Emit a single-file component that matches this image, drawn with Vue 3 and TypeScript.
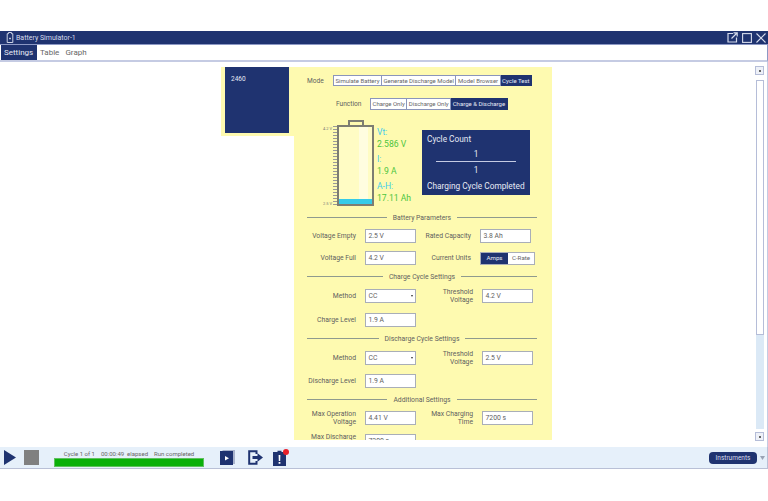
<script setup lang="ts">
const tabs = ['Settings', 'Table', 'Graph']
const modes = ['Simulate Battery', 'Generate Discharge Model', 'Model Browser', 'Cycle Test']
const functions = ['Charge Only', 'Discharge Only', 'Charge & Discharge']
</script>

<template>
  <div class="page">
    <header class="title-bar">
      <svg class="title-icon" viewBox="0 0 8 11" width="8" height="11">
        <path d="M2.500 .5h3v1.200h1.300v8.800H1.200V1.700h1.300z" fill="none" stroke="#dfe4f2" stroke-width=".9" />
        <path d="M3 6.500h2M4 5.500v2" stroke="#dfe4f2" stroke-width=".7" />
      </svg>
      <span class="title-text">Battery Simulator-1</span>
      <div class="window-btns">
        <svg viewBox="0 0 11 11" width="11" height="11">
          <path d="M6 1.500H1v8.500h8.500V5.500" fill="none" stroke="#d5dbec" stroke-width="1.200" />
          <path d="M4.500 6.500 10 1M6.500 .8h3.700v3.700" fill="none" stroke="#d5dbec" stroke-width="1.200" />
        </svg>
        <svg viewBox="0 0 10 10" width="10" height="10">
          <rect x=".6" y=".6" width="8.800" height="8.800" fill="none" stroke="#d5dbec" stroke-width="1.100" />
        </svg>
        <svg viewBox="0 0 10 10" width="10" height="10">
          <path d="M.5.500l9 9M9.500.500l-9 9" stroke="#d5dbec" stroke-width="1.100" />
        </svg>
      </div>
    </header>

    <nav class="tab-bar">
      <span v-for="(tab, i) in tabs" :key="tab" class="tab" :class="{ active: i === 0 }">{{ tab }}</span>
    </nav>

    <main class="content">
      <div class="panel-wrap">
        <section class="panel">
          <div class="side">
            <div class="side-box">2460</div>
          </div>
          <div class="form">
            <div class="mode-row">
              <span class="mode-label">Mode</span>
              <div class="btn-group">
                <span v-for="(m, i) in modes" :key="m" class="seg" :class="{ on: i === 3 }">{{ m }}</span>
              </div>
            </div>
            <div class="func-row">
              <span class="mode-label">Function</span>
              <div class="btn-group tall">
                <span v-for="(f, i) in functions" :key="f" class="seg" :class="{ on: i === 2 }">{{ f }}</span>
              </div>
            </div>

            <div class="status">
              <div class="scale-labels">
                <span>4.2 V</span>
                <span>2.5 V</span>
              </div>
              <div class="ticks"></div>
              <div class="battery">
                <div class="cap"></div>
                <div class="cell">
                  <div class="shine"></div>
                  <div class="charge"></div>
                </div>
              </div>
              <div class="readout">
                <span class="key">Vt:</span>
                <span class="val">2.586 V</span>
                <span class="key gap">I:</span>
                <span class="val">1.9 A</span>
                <span class="key gap">A-H:</span>
                <span class="val">17.11 Ah</span>
              </div>
              <div class="count-box">
                <div>Cycle Count</div>
                <div class="count-num">1</div>
                <div class="count-line"></div>
                <div class="count-num second">1</div>
                <div class="count-msg">Charging Cycle Completed</div>
              </div>
            </div>

            <div class="legend"><span>Battery Parameters</span></div>
            <div class="row r8">
              <label class="lbl">Voltage Empty</label>
              <div class="inp">2.5 V</div>
              <label class="lbl lbl2">Rated Capacity</label>
              <div class="inp">3.8 Ah</div>
            </div>
            <div class="row r8">
              <label class="lbl">Voltage Full</label>
              <div class="inp">4.2 V</div>
              <label class="lbl lbl2">Current Units</label>
              <div class="toggle">
                <span class="t-on">Amps</span>
                <span class="t-off">C-Rate</span>
              </div>
            </div>

            <div class="legend"><span>Charge Cycle Settings</span></div>
            <div class="row r9">
              <label class="lbl">Method</label>
              <div class="inp">CC<i class="caret"></i></div>
              <label class="lbl lbl3">Threshold<br />Voltage</label>
              <div class="inp">4.2 V</div>
            </div>
            <div class="row r10">
              <label class="lbl">Charge Level</label>
              <div class="inp">1.9 A</div>
            </div>

            <div class="legend"><span>Discharge Cycle Settings</span></div>
            <div class="row r9">
              <label class="lbl">Method</label>
              <div class="inp">CC<i class="caret"></i></div>
              <label class="lbl lbl3">Threshold<br />Voltage</label>
              <div class="inp">2.5 V</div>
            </div>
            <div class="row r9">
              <label class="lbl">Discharge Level</label>
              <div class="inp">1.9 A</div>
            </div>

            <div class="legend"><span>Additional Settings</span></div>
            <div class="row r8">
              <label class="lbl">Max Operation<br />Voltage</label>
              <div class="inp">4.41 V</div>
              <label class="lbl lbl3">Max Charging<br />Time</label>
              <div class="inp">7200 s</div>
            </div>
            <div class="row r9">
              <label class="lbl">Max Discharge<br />Time</label>
              <div class="inp">7200 s</div>
            </div>
          </div>
        </section>
      </div>

      <aside class="scroll">
        <div class="scroll-btn"><i></i></div>
        <div class="scroll-track"><div class="scroll-thumb"></div></div>
        <div class="scroll-btn"><i></i></div>
      </aside>
    </main>

    <footer class="bottom-bar">
      <svg class="play" viewBox="0 0 12 15" width="12" height="15"><path d="M0 0l12 7.500L0 15z" fill="#1f3370" /></svg>
      <div class="stop"></div>
      <div class="run">
        <div class="run-text">
          <span>Cycle 1 of 1</span>
          <span>00:00:49&nbsp; elapsed</span>
          <span>Run completed</span>
        </div>
        <div class="progress"></div>
      </div>
      <svg class="tool first" viewBox="0 0 15 15" width="15" height="15">
        <rect x="2.500" y="0" width="12.500" height="14" fill="#a9b3cc" />
        <rect x="0" y="1" width="13" height="14" fill="#1f3370" />
        <path d="M5 6l4 2.200L5 10.500z" fill="#fff" />
      </svg>
      <svg class="tool second" viewBox="0 0 15 15" width="15" height="15">
        <path d="M8.500 4V1.200H1.200v12.600h7.300V11" fill="none" stroke="#1f3370" stroke-width="2" />
        <path d="M4.500 6h5V3.200L15 7.500l-5.500 4.300V9h-5z" fill="#1f3370" />
      </svg>
      <div class="alert">
        <svg viewBox="0 0 13 16" width="13" height="16">
          <path d="M0 2h4.500V.8h4V2H13v14H0z" fill="#1f3370" />
          <path d="M5.600 5h1.800l-.2 6H5.800zM5.600 12h1.800v1.700H5.600z" fill="#fff" />
        </svg>
        <span class="badge"></span>
      </div>
      <button class="instruments">Instruments</button>
      <svg class="more" viewBox="0 0 5 4" width="5" height="4"><path d="M0 0h5L2.500 4z" fill="#9aa3b5" /></svg>
    </footer>
  </div>
</template>

<style>
html,
body {
  margin: 0;
  background: #fff;
}
</style>

<style scoped>
.page {
  width: 768px;
  height: 501px;
  padding-top: 31px;
  box-sizing: border-box;
  display: flex;
  flex-direction: column;
  overflow: hidden;
  font-family: Roboto, "Liberation Sans", sans-serif;
  color: #5f5f5f;
}

.title-bar {
  height: 13px;
  flex: none;
  background: #1f3370;
  border-bottom: 1px solid #8c98c4;
  display: flex;
  align-items: center;
  color: #d5dbec;
  font-size: 7px;
  padding: 0 2px 0 6px;
}

.title-icon {
  flex: none;
}

.title-text {
  margin-left: 2px;
}

.window-btns {
  margin-left: auto;
  display: flex;
  align-items: center;
  gap: 4px;
}

.tab-bar {
  height: 15px;
  flex: none;
  display: flex;
  padding-left: 1px;
  border-bottom: 2px solid #c5cbe3;
  border-right: 1px solid #8c98c4;
  font-size: 8px;
}

.tab {
  margin-left: 3px;
  margin-right: 3px;
  line-height: 15px;
  color: #666;
}

.tab.active {
  width: 36px;
  margin: 0;
  padding-left: 3px;
  background: #1f3370;
  color: #e6eaf5;
  line-height: 15px;
  height: 15px;
  box-sizing: border-box;
  flex: none;
}

.content {
  height: 385px;
  flex: none;
  display: flex;
  border-right: 1px solid #c5cbe3;
  position: relative;
}

.panel-wrap {
  width: 755px;
  flex: none;
  padding: 5px 0 0 221px;
  box-sizing: border-box;
}

.panel {
  width: 331px;
  height: 373px;
  display: flex;
  overflow: hidden;
}

.side {
  width: 73px;
  height: 69px;
  flex: none;
  background: #fefab0;
  padding-left: 4px;
  box-sizing: border-box;
}

.side-box {
  width: 64px;
  height: 66px;
  background: #1f3370;
  color: #e6eaf5;
  font-size: 6.500px;
  padding: 8px 0 0 6px;
  box-sizing: border-box;
}

.form {
  width: 258px;
  flex: none;
  background: #fefab0;
  padding: 8px 15px 0 13px;
  box-sizing: border-box;
}

.mode-row {
  display: flex;
  align-items: center;
  height: 11px;
}

.mode-label {
  font-size: 6.600px;
  flex: none;
  color: #5f5f5f;
}

.mode-row .mode-label {
  width: 26px;
}

.func-row {
  display: flex;
  align-items: center;
  height: 12px;
  margin-top: 12px;
  padding-left: 29px;
}

.func-row .mode-label {
  width: 34px;
}

.btn-group {
  display: flex;
  flex: none;
  height: 11px;
}

.btn-group.tall {
  height: 12px;
}

.seg {
  background: #fff;
  border: 1px solid #8b95bb;
  border-left-width: 0;
  color: #666;
  font-size: 6px;
  line-height: 1;
  padding: 0 1.500px;
  display: flex;
  align-items: center;
  white-space: nowrap;
}

.seg:first-child {
  border-left-width: 1px;
}

.seg.on {
  background: #1f3370;
  border-color: #1f3370;
  color: #e6eaf5;
}

.status {
  height: 86px;
  margin-top: 10px;
  display: flex;
  padding-left: 16px;
}

.scale-labels {
  width: 10px;
  height: 80px;
  margin-top: 6px;
  display: flex;
  flex-direction: column;
  justify-content: space-between;
  font-size: 4px;
  color: #777;
}

.ticks {
  width: 4px;
  height: 79px;
  margin-top: 6px;
  background: repeating-linear-gradient(to bottom, #999 0 1px, transparent 1px 3px);
}

.battery {
  width: 37px;
  flex: none;
}

.cap {
  width: 16px;
  height: 5px;
  margin-left: 11px;
  border: 2px solid #7d7d72;
  border-bottom: 0;
  box-sizing: border-box;
}

.cell {
  height: 81px;
  border: 2px solid #7d7d72;
  box-sizing: border-box;
  background: #fffcc4;
  position: relative;
}

.shine {
  position: absolute;
  top: 0;
  bottom: 0;
  left: 20px;
  width: 9px;
  background: #fffde0;
}

.charge {
  position: absolute;
  left: 0;
  right: 0;
  bottom: 0;
  height: 5px;
  background: #35cbe8;
}

.readout {
  width: 45px;
  flex: none;
  margin-left: 3px;
  padding-top: 6px;
  display: flex;
  flex-direction: column;
  font-size: 8.600px;
  line-height: 12px;
}

.key {
  color: #42cdea;
}

.key.gap {
  margin-top: 3px;
}

.val {
  color: #4cc53e;
}

.count-box {
  width: 108px;
  height: 65px;
  flex: none;
  margin-top: 10px;
  background: #1f3370;
  color: #e6eaf5;
  font-size: 8.300px;
  line-height: 11px;
  padding: 4px 5px 0;
  box-sizing: border-box;
}

.count-num {
  text-align: center;
  margin-top: 4px;
}

.count-num.second {
  margin-top: 3px;
}

.count-line {
  height: 1px;
  margin: 1px 9px 0;
  background: #c5cbe3;
}

.count-msg {
  margin-top: 5px;
  white-space: nowrap;
}

.legend {
  height: 8px;
  margin-top: 7px;
  display: flex;
  align-items: center;
  gap: 6px;
  font-size: 6.800px;
  color: #5f5f5f;
  white-space: nowrap;
}

.legend span {
  padding-top: 1px;
}

.legend::before,
.legend::after {
  content: "";
  flex: 1;
  height: 1px;
  background: #8f9a8e;
}

.row {
  display: flex;
  align-items: center;
  height: 14px;
}

.r8 {
  margin-top: 8px;
}

.r9 {
  margin-top: 9px;
}

.r10 {
  margin-top: 10px;
}

.lbl {
  width: 49px;
  flex: none;
  margin-right: 9px;
  text-align: right;
  font-size: 6.800px;
  line-height: 8px;
  color: #5f5f5f;
  white-space: nowrap;
}

.lbl2 {
  width: 55px;
}

.lbl3 {
  width: 57px;
}

.inp {
  width: 51px;
  height: 14px;
  flex: none;
  background: #fff;
  border: 1px solid #a9aeb8;
  box-sizing: border-box;
  font-size: 6.800px;
  line-height: 12px;
  padding-left: 2.500px;
  color: #5f5f5f;
  position: relative;
}

.caret {
  position: absolute;
  right: 2px;
  top: 5px;
  border-left: 1.500px solid transparent;
  border-right: 1.500px solid transparent;
  border-top: 2px solid #333;
}

.toggle {
  width: 55px;
  height: 13px;
  display: flex;
  background: #fff;
  border: 1px solid #a9aeb8;
  box-sizing: border-box;
  font-size: 6.200px;
  line-height: 11px;
  text-align: center;
}

.t-on {
  width: 27px;
  background: #1f3370;
  color: #e6eaf5;
}

.t-off {
  flex: 1;
  color: #666;
}

.scroll {
  position: absolute;
  right: 3px;
  top: 4px;
  width: 9px;
  height: 375px;
  display: flex;
  flex-direction: column;
  align-items: center;
}

.scroll-btn {
  width: 9px;
  height: 9px;
  flex: none;
  background: #eef1f8;
  border: 1px solid #b5bdd8;
  box-sizing: border-box;
  display: flex;
  align-items: center;
  justify-content: center;
}

.scroll-btn i {
  width: 2px;
  height: 2px;
  background: #666;
}

.scroll-track {
  width: 8px;
  flex: 1;
  margin: 5px 0 3px;
  background: #dbe9f6;
}

.scroll-thumb {
  height: 255px;
  background: #fff;
  border: 1px solid #b5bdd8;
  box-sizing: border-box;
}

.bottom-bar {
  height: 22px;
  flex: none;
  background: #e6f0fa;
  border-bottom: 1px solid #b9c0d6;
  border-right: 1px solid #b9c0d6;
  display: flex;
  align-items: center;
  padding-left: 4px;
  box-sizing: border-box;
}

.play {
  flex: none;
}

.stop {
  width: 15px;
  height: 15px;
  flex: none;
  margin-left: 8px;
  background: #808080;
}

.run {
  width: 150px;
  flex: none;
  margin-left: 15px;
  padding-top: 2px;
}

.run-text {
  display: flex;
  justify-content: center;
  gap: 6px;
  font-size: 6px;
  line-height: 7px;
  color: #666;
  white-space: nowrap;
}

.progress {
  height: 9px;
  margin-top: 1px;
  background: #0ab00a;
  border: 1px solid #5ec05e;
  box-sizing: border-box;
}

.tool.first {
  margin-left: 16px;
}

.tool.second {
  margin-left: 13px;
}

.alert {
  margin-left: 10px;
  position: relative;
  height: 16px;
}

.badge {
  position: absolute;
  top: -1px;
  right: -3px;
  width: 6px;
  height: 6px;
  border-radius: 50%;
  background: #e8202a;
}

.instruments {
  width: 48px;
  height: 12px;
  margin-left: auto;
  padding: 0;
  background: #1f3370;
  border: 0;
  border-radius: 4px;
  color: #d5dbec;
  font-family: inherit;
  font-size: 6.500px;
}

.more {
  margin: 0 2px 0 3px;
}
</style>
